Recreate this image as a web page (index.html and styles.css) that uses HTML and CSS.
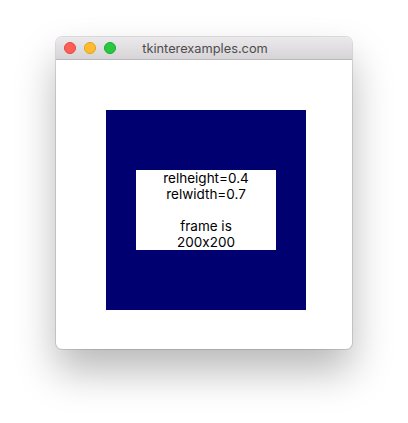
FILE: index.html
```html
<!DOCTYPE html>
<html>
<head>
<meta charset="utf-8">
<link rel="stylesheet" href="styles.css">
</head>
<body>
<div class="window">
  <div class="titlebar">
    <div class="lights">
      <span class="light red"></span>
      <span class="light yellow"></span>
      <span class="light green"></span>
    </div>
    <div class="title">tkinterexamples.com</div>
  </div>
  <div class="content">
    <div class="frame">
      <div class="label">relheight=0.4<br>relwidth=0.7<br><br>frame is<br>200x200</div>
    </div>
  </div>
</div>
</body>
</html>
```

FILE: styles.css
```css
html, body {
  margin: 0;
  padding: 0;
  background: #ffffff;
}
body {
  width: 408px;
  height: 423px;
  overflow: hidden;
  padding-top: 37px;
  padding-left: 56px;
  box-sizing: border-box;
  font-family: Inter, "Liberation Sans", Arial, sans-serif;
  font-feature-settings: "calt" 0;
}
.window {
  width: 296px;
  height: 312px;
  border-radius: 6px;
  background: #ffffff;
  box-shadow: 0 22px 40px rgba(0,0,0,0.28), 0 0 0 1px rgba(0,0,0,0.12);
  display: flex;
  flex-direction: column;
  overflow: hidden;
}
.titlebar {
  position: relative;
  height: 22px;
  flex: none;
  background: linear-gradient(#ebe9eb, #d6d4d6);
  border-bottom: 1px solid #b9b7b9;
  display: flex;
  align-items: center;
  justify-content: center;
}
.lights {
  position: absolute;
  left: 8px;
  top: 5px;
  display: flex;
  gap: 8px;
}
.light {
  width: 12px;
  height: 12px;
  border-radius: 50%;
  box-sizing: border-box;
}
.red { background: #fd5f57; border: 1px solid #e2463f; }
.yellow { background: #febc2e; border: 1px solid #e1a116; }
.green { background: #28c840; border: 1px solid #1aab29; }
.title {
  font-size: 12.8px;
  color: #4d4d4d;
  padding-left: 2px;
}
.content {
  flex: 1;
  padding: 50px 0 0 50px;
}
.frame {
  width: 200px;
  height: 200px;
  background: #000070;
  display: flex;
  align-items: center;
  justify-content: center;
}
.label {
  width: 140px;
  height: 80px;
  background: #ffffff;
  color: #000;
  font-size: 13.5px;
  line-height: 16px;
  text-align: center;
}
```
